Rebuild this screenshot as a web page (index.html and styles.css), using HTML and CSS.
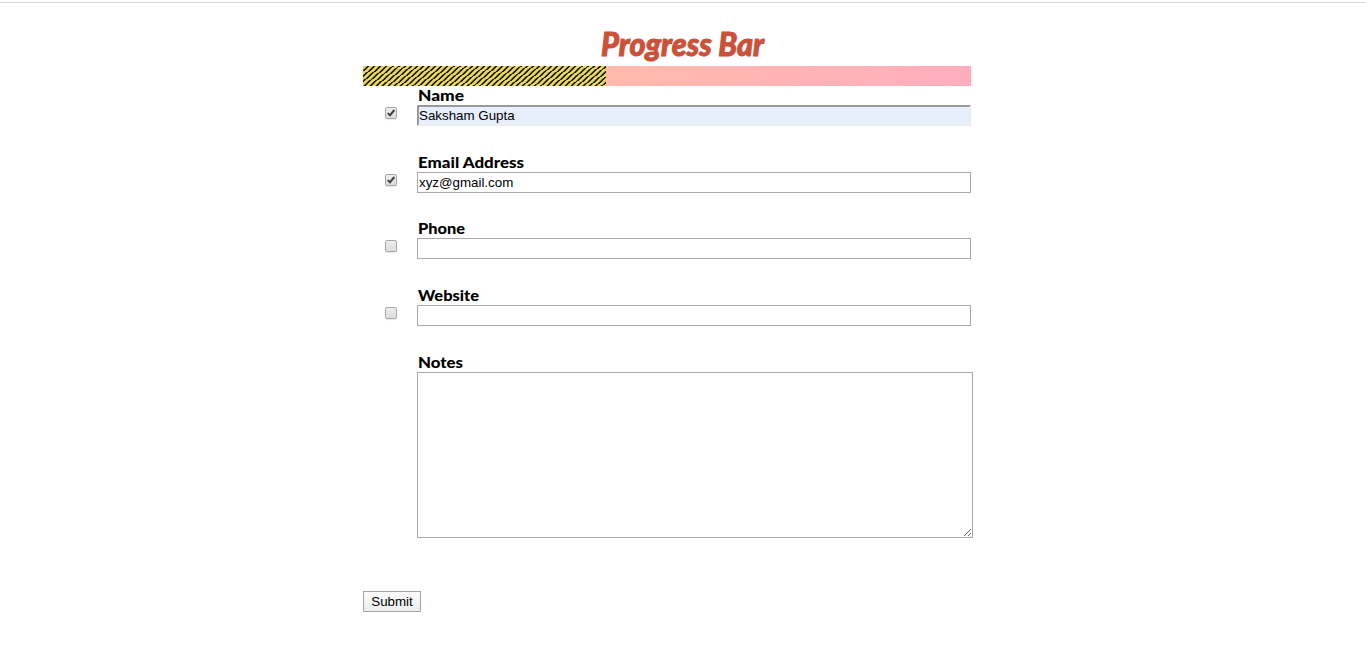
FILE: index.html
```html
<!DOCTYPE html>
<html lang="en">
<head>
<meta charset="utf-8">
<title>Progress Bar</title>
<link rel="stylesheet" href="styles.css">
</head>
<body>
<form class="form">
  <h1 class="title"><svg width="172" height="44"><text x="3" y="30" textLength="163" lengthAdjust="spacingAndGlyphs">Progress Bar</text></svg></h1>
  <div class="progress"><div class="progress-fill" style="width:40%"></div></div>
  <div class="row">
    <span class="check"><svg class="tick" viewBox="0 0 10 10"><path d="M1.7 5.1 4 7.3 8.3 2"/></svg></span>
    <div class="field"><label class="label"><svg width="60" height="19"><text x="1" y="15" textLength="46" lengthAdjust="spacingAndGlyphs">Name</text></svg></label><input class="input filled" value="Saksham Gupta"></div>
  </div>
  <div class="row">
    <span class="check"><svg class="tick" viewBox="0 0 10 10"><path d="M1.7 5.1 4 7.3 8.3 2"/></svg></span>
    <div class="field"><label class="label"><svg width="120" height="19"><text x="1" y="15" textLength="106" lengthAdjust="spacingAndGlyphs">Email Address</text></svg></label><input class="input" value="xyz@gmail.com"></div>
  </div>
  <div class="row short">
    <span class="check"></span>
    <div class="field"><label class="label"><svg width="60" height="19"><text x="1" y="15" textLength="47" lengthAdjust="spacingAndGlyphs">Phone</text></svg></label><input class="input"></div>
  </div>
  <div class="row">
    <span class="check"></span>
    <div class="field"><label class="label"><svg width="70" height="19"><text x="1" y="15" textLength="61" lengthAdjust="spacingAndGlyphs">Website</text></svg></label><input class="input"></div>
  </div>
  <div class="row notes">
    <div class="field"><label class="label"><svg width="60" height="19"><text x="1" y="15" textLength="45" lengthAdjust="spacingAndGlyphs">Notes</text></svg></label><textarea class="input area"></textarea></div>
  </div>
  <button class="submit" type="button">Submit</button>
</form>
</body>
</html>
```
FILE: styles.css
```css
body {
  margin: 0;
  padding-top: 2px;
  background: linear-gradient(#dadada, #dadada) 0 2px / 100% 1px no-repeat #fff;
  font-family: "Liberation Sans", Arial, sans-serif;
}
.form { width: 608px; margin: 0 0 0 363px; padding-top: 24px; }
.title { margin: 0; height: 40px; padding-left: 235px; }
.title svg { display: block; overflow: visible; }
.title text {
  font: italic 900 33px Lato, sans-serif;
  fill: #cb5139;
  stroke: #cb5139;
  stroke-width: 1px;
}
.progress { height: 20px; background: linear-gradient(to right, #ffc39f, #ffadbd); }
.progress-fill {
  height: 100%;
  background: repeating-linear-gradient(-41deg, #f0dd48 0 1.5px, #c9bc63 1.5px 2.1px, #24211d 2.1px 3.4px, #a99f5b 3.4px 4px);
}
.row { display: flex; height: 67px; }
.row.short { margin-top: -1px; }
.check {
  box-sizing: border-box;
  flex: none;
  width: 12px;
  height: 12px;
  margin: 21px 20px 0 22px;
  border: 1px solid #a8a8a8;
  border-radius: 2px;
  background: linear-gradient(#ededed, #dcdcdc);
  box-shadow: 0 1px 1px #e8e8e8;
}
.tick { display: block; width: 10px; height: 10px; }
.tick path { fill: none; stroke: #404040; stroke-width: 2; }
.field { width: 554px; flex: none; }
.label { display: block; height: 19px; }
.label svg { display: block; }
.label text { font: 900 15px Lato, sans-serif; }
.input {
  display: block;
  box-sizing: border-box;
  width: 554px;
  height: 21px;
  margin: 0;
  padding: 1px;
  border: 1px solid #a9a9a9;
  border-radius: 0;
  outline: 0;
  background: #fff;
  color: #000;
  font: 13.333px "Liberation Sans", Arial, sans-serif;
}
.filled {
  padding: 0;
  border: 2px solid;
  border-color: #999 #ededed #ededed #999;
  background: #e8effc;
}
.notes { height: 238px; padding-left: 54px; }
.area { width: 556px; height: 166px; resize: both; }
.submit {
  display: block;
  box-sizing: border-box;
  width: 58px;
  height: 21px;
  padding: 0;
  border: 1px solid #a6a6a6;
  border-radius: 0;
  background: linear-gradient(#fafafa, #eee);
  color: #000;
  font: 13.333px "Liberation Sans", Arial, sans-serif;
}
```
